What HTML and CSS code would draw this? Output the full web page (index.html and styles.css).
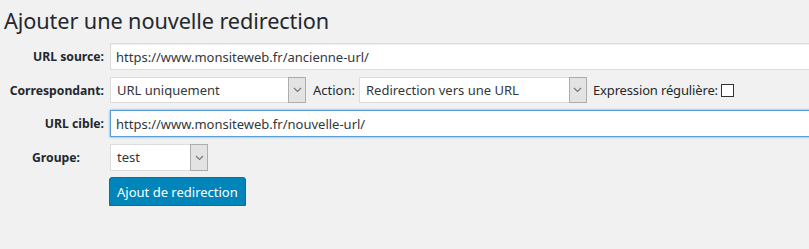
FILE: index.html
```html
<!DOCTYPE html>
<html lang="fr">
<head>
  <meta charset="UTF-8">
  <meta name="viewport" content="width=device-width, initial-scale=1.0">

  <title>Ajouter une nouvelle redirection</title>

  <link rel="stylesheet" href="styles.css">
</head>
<body>

<div class="wrap">
  <h1>Ajouter une nouvelle redirection</h1>

  <form class="add-form">
    <div class="row">
      <label class="label">URL source:</label>
      <input class="text" type="text" value="https://www.monsiteweb.fr/ancienne-url/">
    </div>

    <div class="row">
      <label class="label">Correspondant:</label>
      <div class="select select-match">
        <span class="value">URL uniquement</span>
        <span class="arrow">
          <svg width="9" height="6" viewBox="0 0 9 6"><path d="M1 1l3.5 3.5L8 1" fill="none" stroke="#777" stroke-width="1.2"/></svg>
        </span>
      </div>
      <span class="inline-label">Action:</span>
      <div class="select select-action">
        <span class="value">Redirection vers une URL</span>
        <span class="arrow">
          <svg width="9" height="6" viewBox="0 0 9 6"><path d="M1 1l3.5 3.5L8 1" fill="none" stroke="#777" stroke-width="1.2"/></svg>
        </span>
      </div>
      <span class="inline-label regex">Expression régulière:</span>
      <span class="checkbox"></span>
    </div>

    <div class="row">
      <label class="label">URL cible:</label>
      <input class="text focus" type="text" value="https://www.monsiteweb.fr/nouvelle-url/">
    </div>

    <div class="row">
      <label class="label center">Groupe:</label>
      <div class="select select-group">
        <span class="value">test</span>
        <span class="arrow">
          <svg width="9" height="6" viewBox="0 0 9 6"><path d="M1 1l3.5 3.5L8 1" fill="none" stroke="#777" stroke-width="1.2"/></svg>
        </span>
      </div>
    </div>

    <div class="row">
      <span class="label"></span>
      <button type="button" class="button">Ajout de redirection</button>
    </div>
  </form>
</div>

</body>
</html>
```

FILE: styles.css
```css
body {
  margin: 0;
  background-color: #f1f1f1;
  font-family: "Noto Sans", "Open Sans", sans-serif;
  color: #23282d;
  overflow: hidden;
}

.wrap {
  padding: 6px 0 0 4px;
}

h1 {
  margin: 0;
  font-size: 21.7px;
  font-weight: 400;
  line-height: 30px;
  letter-spacing: -0.1px;
}

.add-form {
  display: flex;
  flex-direction: column;
  gap: 7px;
  margin-top: 7px;
}

.row {
  display: flex;
  align-items: center;
}

.label {
  width: 96px;
  margin-left: 4px;
  padding-right: 6px;
  text-align: right;
  font-size: 12.2px;
  font-weight: bold;
  flex-shrink: 0;
}

.label.center {
  text-align: center;
}

.text {
  flex: 1;
  height: 27px;
  box-sizing: border-box;
  margin: 0 -10px 0 0;
  padding: 0 5px;
  border: 1px solid #ddd;
  background: #fff;
  box-shadow: inset 0 1px 2px rgba(0, 0, 0, 0.07);
  font-family: inherit;
  font-size: 13px;
  color: #32373c;
  outline: none;
}

.text.focus {
  border-color: #5b9dd9;
  box-shadow: 0 0 2px rgba(30, 140, 190, 0.8);
}

.select {
  display: flex;
  height: 26px;
  box-sizing: border-box;
  background: #fff;
  border: 1px solid #ddd;
  font-size: 13px;
  color: #32373c;
}

.select .value {
  flex: 1;
  padding-left: 6px;
  line-height: 24px;
}

.select .arrow {
  display: flex;
  align-items: center;
  justify-content: center;
  width: 16px;
  margin: -1px -1px -1px 0;
  background: #e3e3e3;
  border: 1px solid #adadad;
}

.select-match {
  width: 196px;
}

.select-action {
  width: 228px;
}

.select-group {
  width: 98px;
  height: 27px;
}

.inline-label {
  font-size: 13px;
  margin: 0 4px 0 7px;
}

.inline-label.regex {
  margin-left: 6px;
  margin-right: 3px;
  letter-spacing: -0.15px;
}

.checkbox {
  width: 13px;
  height: 13px;
  box-sizing: border-box;
  border: 1px solid #333;
  background: #fff;
}

.button {
  height: 29px;
  padding: 0 7px;
  margin-top: -1px;
  margin-left: -1px;
  background: #0085ba;
  border: 1px solid #0073aa;
  border-radius: 3px;
  box-shadow: 0 1px 0 #006799;
  color: #fff;
  font-family: inherit;
  font-size: 13px;
}
```
